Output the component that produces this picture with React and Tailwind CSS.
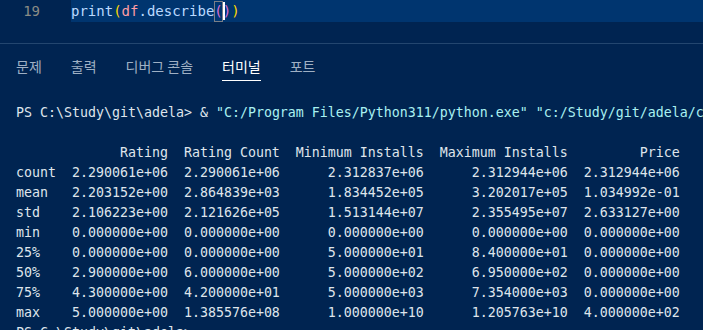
import React from "react";

const rows = [
  ["count", "2.290061e+06", "2.290061e+06", "2.312837e+06", "2.312944e+06", "2.312944e+06"],
  ["mean", "2.203152e+00", "2.864839e+03", "1.834452e+05", "3.202017e+05", "1.034992e-01"],
  ["std", "2.106223e+00", "2.121626e+05", "1.513144e+07", "2.355495e+07", "2.633127e+00"],
  ["min", "0.000000e+00", "0.000000e+00", "0.000000e+00", "0.000000e+00", "0.000000e+00"],
  ["25%", "0.000000e+00", "0.000000e+00", "5.000000e+01", "8.400000e+01", "0.000000e+00"],
  ["50%", "2.900000e+00", "6.000000e+00", "5.000000e+02", "6.950000e+02", "0.000000e+00"],
  ["75%", "4.300000e+00", "4.200000e+01", "5.000000e+03", "7.354000e+03", "0.000000e+00"],
  ["max", "5.000000e+00", "1.385576e+08", "1.000000e+10", "1.205763e+10", "4.000000e+02"],
];

const widths = [12, 12, 16, 16, 12];
const header = ["Rating", "Rating Count", "Minimum Installs", "Maximum Installs", "Price"];

function rpad(s, n) {
  return s + " ".repeat(Math.max(0, n - s.length));
}
function lpad(s, n) {
  return " ".repeat(Math.max(0, n - s.length)) + s;
}

const headerLine = "     " + header.map((h, i) => "  " + lpad(h, widths[i])).join("");
const rowLines = rows.map(
  (r) => rpad(r[0], 5) + r.slice(1).map((v, i) => "  " + lpad(v, widths[i])).join("")
);

const mono = { fontFamily: '"DejaVu Sans Mono", "Liberation Mono", monospace' };

export default function App() {
  return (
    <div className="w-[703px] h-[330px] overflow-hidden bg-[#002451] relative">
      {/* Editor */}
      <div className="h-[44px] flex border-b border-[#23466f]">
        <div className="w-[71px] h-[22px] flex items-center justify-end pr-[31px] text-[14px] text-[#8b8c85]" style={mono}>
          19
        </div>
        <div className="flex-1 h-[22px] bg-[#00356f] flex items-center text-[14px] text-[#bbdaff] whitespace-pre" style={mono}>
          <span>print</span>
          <span className="text-[#ffd700]">(</span>
          <span className="text-[#ff9da4]">df</span>
          <span>.describe</span>
          <span className="relative text-[#da70d6] outline outline-1 outline-[#7a7f87] -outline-offset-1">(</span>
          <span className="relative text-[#da70d6]">
            <span className="absolute left-0 top-[1px] w-[2px] h-[18px] bg-white"></span>
            )
          </span>
          <span className="text-[#ffd700]">)</span>
        </div>
      </div>

      {/* Panel tabs */}
      <div
        className="h-[45px] flex items-start pl-[16px] gap-[29px] text-[14px] text-[#9fb0c4]"
        style={{ fontFamily: '"Noto Sans CJK KR", "Noto Sans", sans-serif' }}
      >
        <div className="pt-[12px] leading-[20px]">문제</div>
        <div className="pt-[12px] leading-[20px]">출력</div>
        <div className="pt-[12px] leading-[20px]">디버그 콘솔</div>
        <div className="pt-[12px] leading-[20px] text-white flex flex-col items-stretch">
          <span>터미널</span>
          <span className="mt-[4px] h-[1px] bg-white"></span>
        </div>
        <div className="pt-[12px] leading-[20px]">포트</div>
      </div>

      {/* Terminal */}
      <div
        className="pl-[16px] pt-[14px] text-[13.29px] leading-[20px] text-[#dfe5ec] whitespace-pre"
        style={mono}
      >
        <div>
          PS C:\Study\git\adela&gt; &amp;{" "}
          <span className="text-[#a9f1f1]">"C:/Program Files/Python311/python.exe"</span>{" "}
          <span className="text-[#a9f1f1]">"c:/Study/git/adela/code.py"</span>
        </div>
        <div>&nbsp;</div>
        <div>{headerLine}</div>
        {rowLines.map((l, i) => (
          <div key={i}>{l}</div>
        ))}
        <div>PS C:\Study\git\adela&gt; </div>
      </div>
    </div>
  );
}
